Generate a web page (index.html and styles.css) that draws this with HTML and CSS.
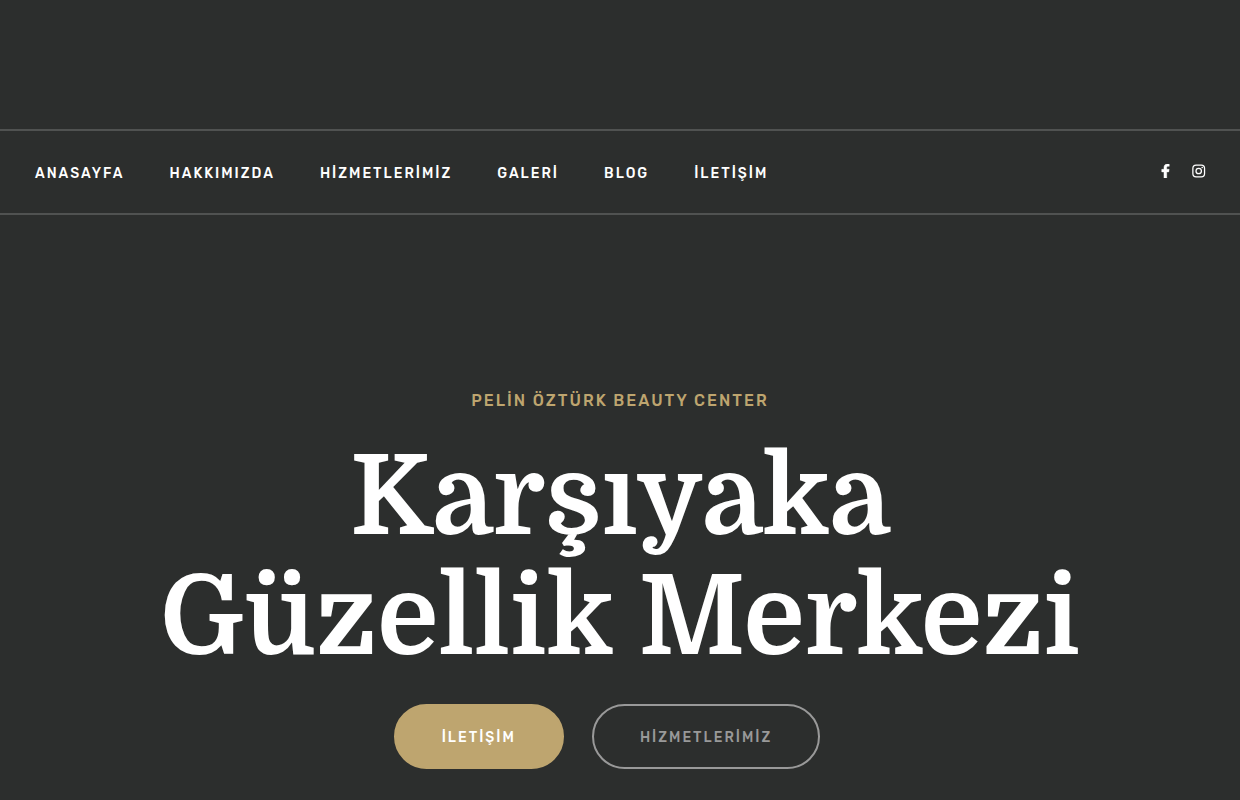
FILE: index.html
```html
<!DOCTYPE html>
<html lang="tr">

<head>
<meta charset="utf-8">
<meta name="viewport" content="width=device-width, initial-scale=1">
<title>Pelin Öztürk Beauty Center</title>
<link rel="stylesheet" href="styles.css">
</head>

<body>
<header class="header">
	<nav class="navbar">
		<ul class="menu">
			<li><a href="#">ANASAYFA</a></li>
			<li><a href="#">HAKKIMIZDA</a></li>
			<li><a href="#">HİZMETLERİMİZ</a></li>
			<li><a href="#">GALERİ</a></li>
			<li><a href="#">BLOG</a></li>
			<li><a href="#iletisim">İLETİŞİM</a></li>
		</ul>
		<ul class="social">
			<li><a href="#" aria-label="Facebook"><svg width="9" height="14" viewBox="0 0 320 512"><path fill="currentColor" stroke="currentColor" stroke-width="16" d="M279.14 288l14.22-92.66h-88.91v-60.13c0-25.35 12.42-50.06 52.24-50.06h40.42V6.26S260.43 0 225.36 0c-73.22 0-121.08 44.38-121.08 124.72v70.62H22.89V288h81.39v224h100.17V288z"/></svg></a></li>
			<li><a href="#" aria-label="Instagram"><svg width="14" height="14" viewBox="24 14 484 484"><g fill="none" stroke="currentColor" stroke-width="44"><rect x="54" y="54" width="404" height="404" rx="112"/><circle cx="256" cy="256" r="94"/></g><circle cx="376" cy="136" r="28" fill="currentColor"/></svg></a></li>
		</ul>
	</nav>
</header>
<main class="hero">
	<p class="subtitle">PELİN ÖZTÜRK BEAUTY CENTER</p>
	<h1><span>Karşıyaka</span> <span>Güzellik Merkezi</span></h1>
	<div class="actions">
		<a class="btn btn-gold" href="#iletisim">İLETİŞİM</a>
		<a class="btn btn-outline" href="#">HİZMETLERİMİZ</a>
	</div>
</main>
</body>

</html>
```

FILE: styles.css
```css
* { box-sizing: border-box; }
body { margin: 0; background: #2c2e2d; color: #fff; font-family: Rubik, Roboto, sans-serif; font-weight: 500; }
a { color: inherit; text-decoration: none; }
ul { display: flex; margin: 0; padding: 0; list-style: none; }

.header { padding-top: 129px; }
.navbar { display: flex; align-items: center; justify-content: space-between; padding: 0 34px 0 35px; border-top: 2px solid #505251; border-bottom: 2px solid #505251; }
.menu { gap: 45px; padding-top: 4px; font-size: 14px; line-height: 78px; letter-spacing: 2px; }
.social { gap: 22px; padding-bottom: 2px; }
.social svg { display: block; }

.hero { padding: 172px 20px 31px; text-align: center; }
.subtitle { margin: 0; color: #bea56f; font-size: 16px; line-height: 28px; letter-spacing: 2px; }
h1 { margin: 23px 0 0; font-family: Domine, "Source Serif 4", "Noto Serif", "Liberation Serif", serif; font-size: 110px; font-weight: 600; line-height: 120px; }
h1 span { display: block; }
.actions { display: flex; justify-content: center; gap: 28px; margin: 26px 26px 0 0; }
.btn { padding: 3px 46px 0; border: 2px solid #bea56f; border-radius: 33px; font-size: 14px; line-height: 58px; letter-spacing: 2px; }
.btn-gold { background: #bea56f; }
.btn-outline { border-color: #999; color: #999; }
```
